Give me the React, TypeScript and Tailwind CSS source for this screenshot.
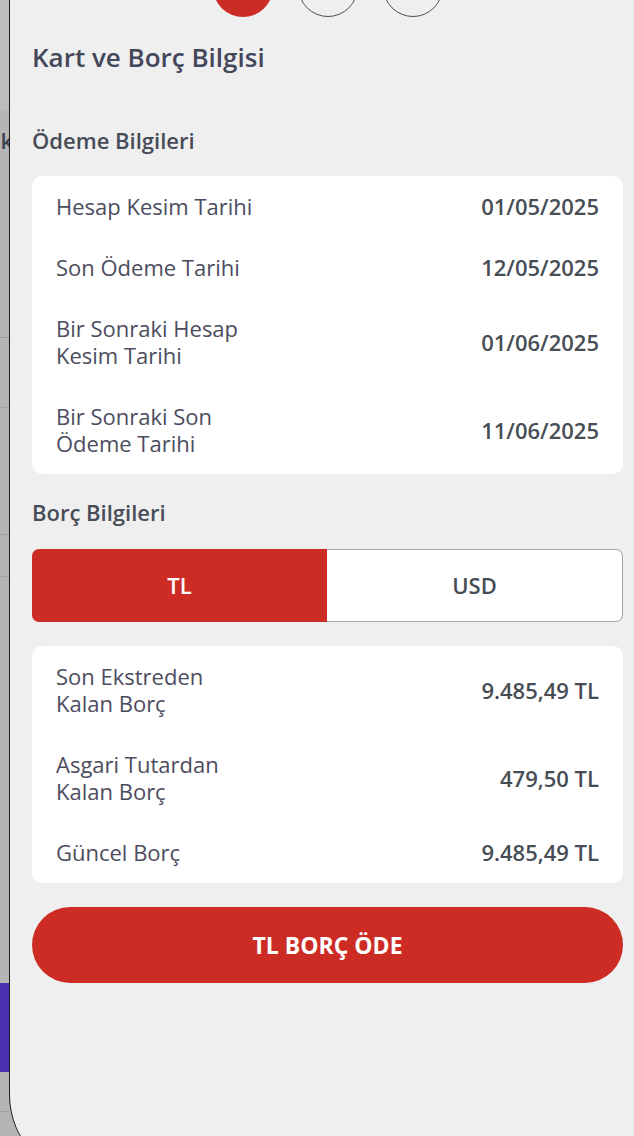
const font = { fontFamily: "'Open Sans', Lato, sans-serif" };

const odeme = [
  { label: ["Hesap Kesim Tarihi"], value: "01/05/2025" },
  { label: ["Son Ödeme Tarihi"], value: "12/05/2025" },
  { label: ["Bir Sonraki Hesap", "Kesim Tarihi"], value: "01/06/2025" },
  { label: ["Bir Sonraki Son", "Ödeme Tarihi"], value: "11/06/2025" },
];

const borc = [
  { label: ["Son Ekstreden", "Kalan Borç"], value: "9.485,49 TL" },
  { label: ["Asgari Tutardan", "Kalan Borç"], value: "479,50 TL" },
  { label: ["Güncel Borç"], value: "9.485,49 TL" },
];

type Row = { label: string[]; value: string };

const InfoCard = ({ rows }: { rows: Row[] }) => (
  <div className="flex flex-col rounded-[10px] bg-white px-6">
    {rows.map((r) => (
      <div key={r.value + r.label[0]} className="flex items-center justify-between py-[17px]">
        <div className="flex flex-col text-[22px] leading-[27px] text-[#4c4c5e]">
          {r.label.map((l) => (
            <span key={l}>{l}</span>
          ))}
        </div>
        <span className="text-[22px] font-semibold leading-[27px] text-[#474d54]">{r.value}</span>
      </div>
    ))}
  </div>
);

export default function App() {
  return (
    <div className="flex h-[1136px] w-[634px] overflow-hidden bg-[#b5b5b5]" style={font}>
      {/* page behind the sheet */}
      <div className="flex w-[9px] shrink-0 flex-col">
        <div className="h-[110px] bg-[#bdbdbd]" />
        <div className="flex h-[228px] flex-col border-b border-[#9d9d9d]">
          <div className="mt-[14px] flex h-[30px] justify-end overflow-hidden text-[22px] font-semibold text-[#3f4656]">
            <span className="-mr-[4px]">k</span>
          </div>
        </div>
        <div className="h-[70px] border-b border-[#a4a4a4]" />
        <div className="h-[127px] border-b border-[#a0a0a0]" />
        <div className="h-[42px] border-b border-[#a4a4a4]" />
        <div className="h-[406px]" />
        <div className="h-[89px] bg-[#4b30b2]" />
        <div className="h-[40px] border-b border-[#a0a0a0]" />
      </div>

      {/* sheet */}
      <div className="flex h-[1177px] w-[636px] shrink-0 flex-col rounded-bl-[82px] border-l border-[#1c1c1c] bg-[#efefef] px-[22px]">
        <div className="-mt-[43px] flex justify-center gap-[25px]">
          <div className="h-[60px] w-[60px] rounded-full bg-[#cd2c24]" />
          <div className="h-[60px] w-[60px] rounded-full border border-[#4d4d60]" />
          <div className="h-[60px] w-[60px] rounded-full border border-[#4d4d60]" />
        </div>

        <h1 className="mt-[24px] text-[26px] font-semibold leading-[32px] text-[#44465a]">Kart ve Borç Bilgisi</h1>

        <h2 className="mt-[52px] text-[22px] font-semibold leading-[30px] text-[#474c58]">Ödeme Bilgileri</h2>
        <div className="mt-[21px]">
          <InfoCard rows={odeme} />
        </div>

        <h2 className="mt-[23px] text-[22px] font-semibold leading-[30px] text-[#474c58]">Borç Bilgileri</h2>
        <div className="mt-[22px] flex h-[73px]">
          <button className="flex flex-1 items-center justify-center rounded-l-[7px] bg-[#cd2c24] text-[22px] font-semibold text-white">
            TL
          </button>
          <button className="flex flex-1 items-center justify-center rounded-r-[7px] border border-l-0 border-[#a6a6a6] bg-white text-[22px] font-semibold text-[#474d54]">
            USD
          </button>
        </div>

        <div className="mt-[24px]">
          <InfoCard rows={borc} />
        </div>

        <button className="mt-[24px] flex h-[76px] items-center justify-center rounded-full bg-[#cd2c24] text-[23px] font-bold text-white">
          TL BORÇ ÖDE
        </button>
      </div>
    </div>
  );
}
